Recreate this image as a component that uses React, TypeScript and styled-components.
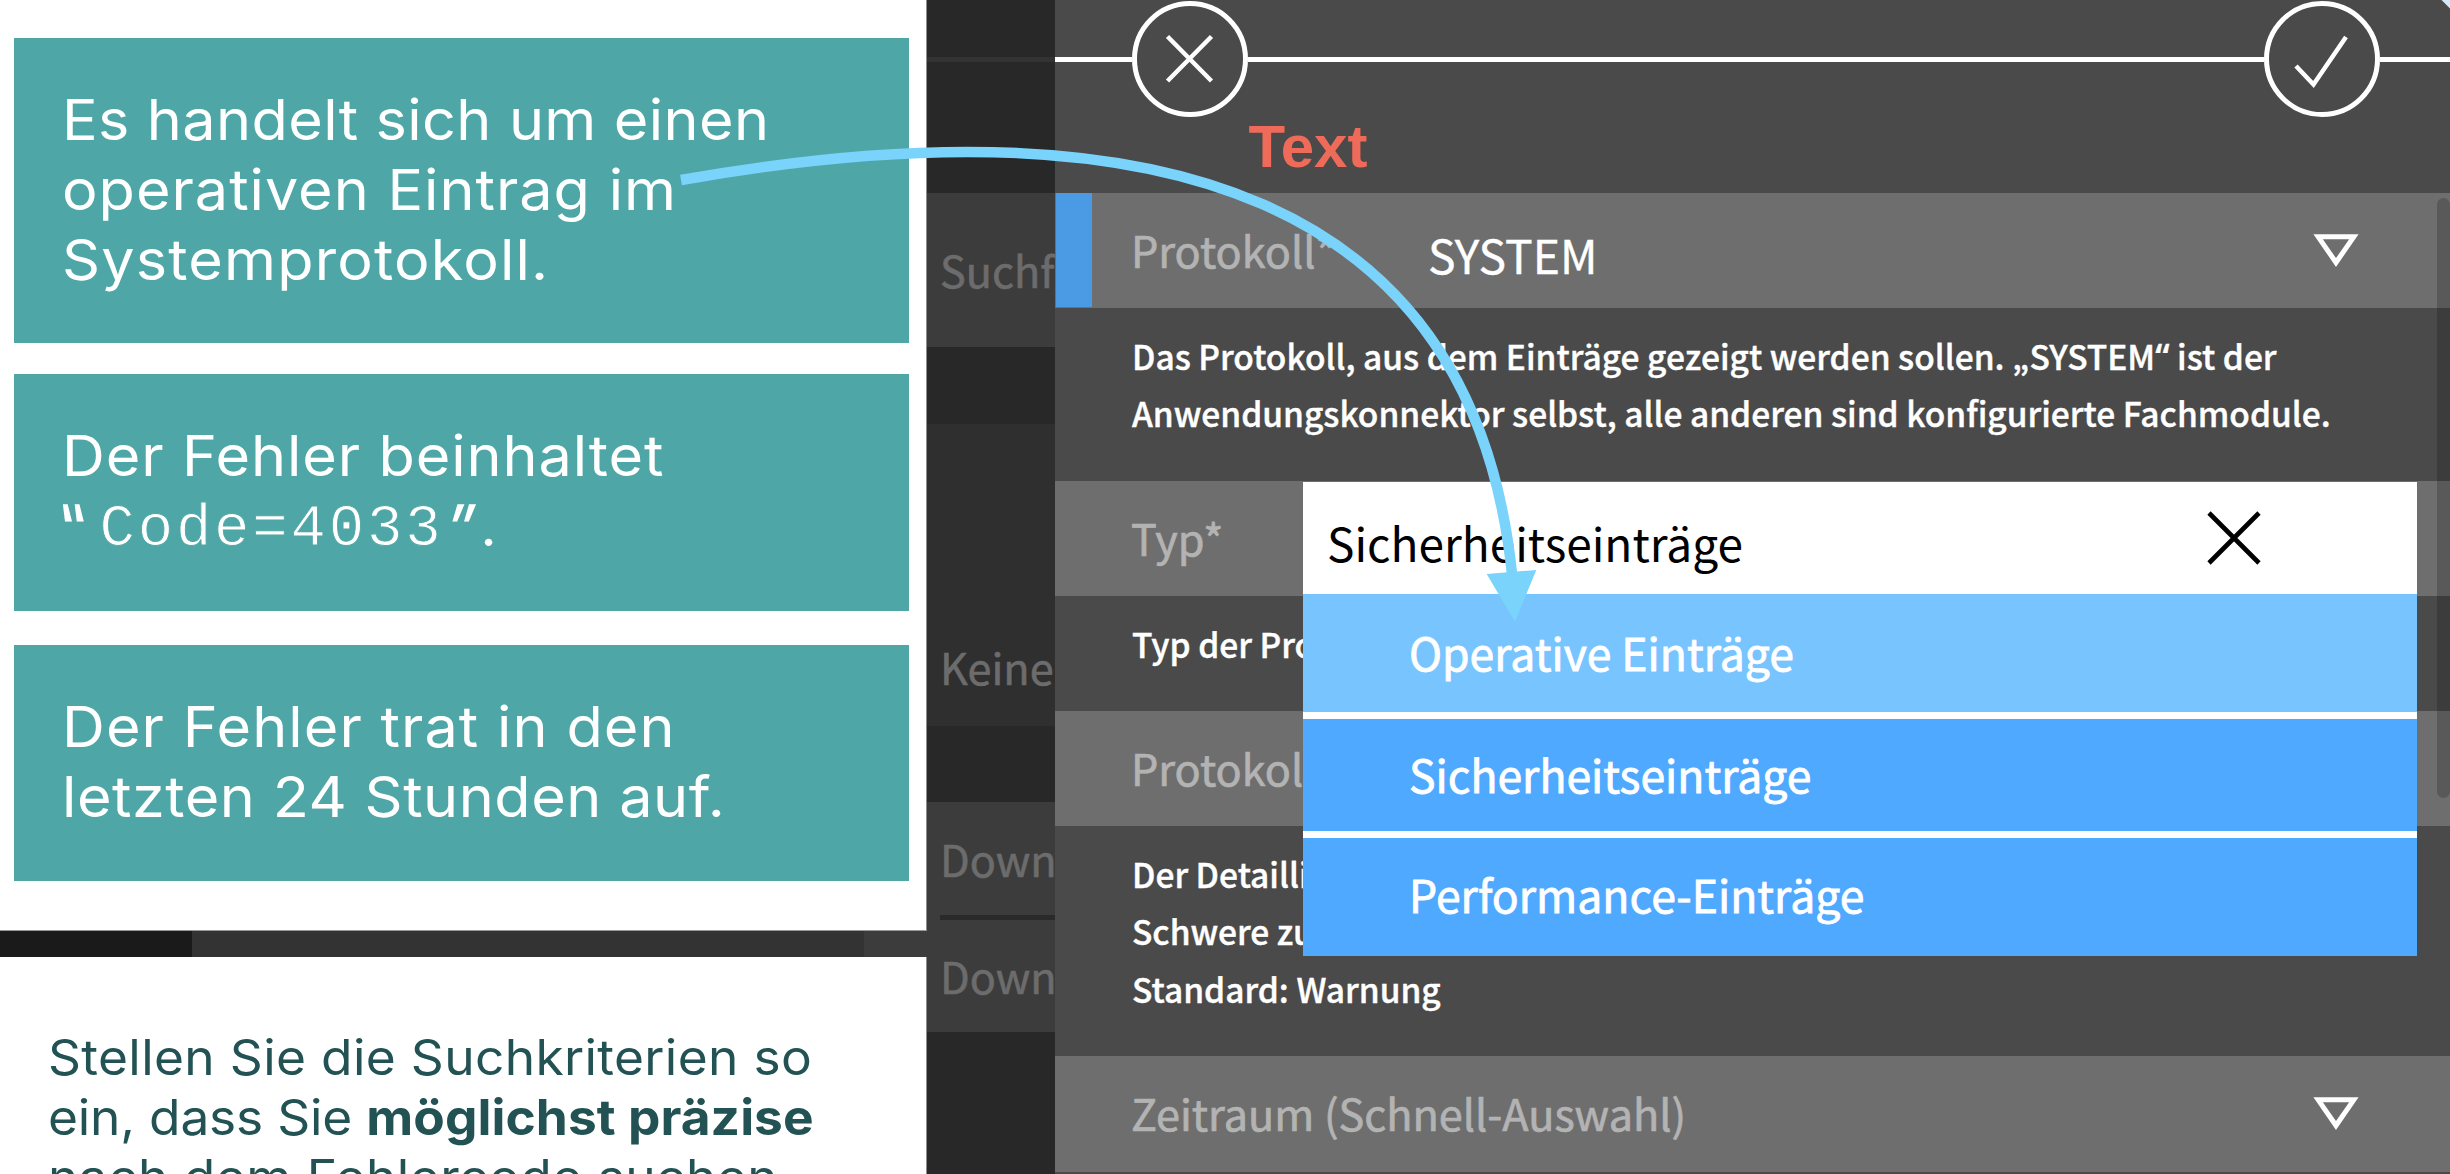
import React from 'react';
import styled, { createGlobalStyle } from 'styled-components';

const sans = '"Noto Sans CJK SC", "Noto Sans", sans-serif';
const grotesk = 'Inter, "Liberation Sans", sans-serif';

const GlobalStyle = createGlobalStyle`
  * { box-sizing: border-box; }
  body { margin: 0; background: #282828; }
`;

const Page = styled.main`
  position: relative;
  display: flex;
  width: 2450px;
  height: 1174px;
  overflow: hidden;
  font-family: ${sans};
`;

/* ---------- left column: instructions ---------- */

const Instructions = styled.section`
  flex: none;
  display: flex;
  flex-direction: column;
  width: 927px;
  height: 1174px;
  overflow: hidden;
  font-family: ${grotesk};
`;

const CardStack = styled.div`
  flex: none;
  display: flex;
  flex-direction: column;
  height: 931px;
  padding: 38px 17px 0 14px;
  background: #fff;
  border-right: 1px solid #8c8c8c;
  border-bottom: 1px solid #999;
`;

const Card = styled.article<{ $height: number; $gap: number }>`
  flex: none;
  height: ${(p) => p.$height}px;
  margin-bottom: ${(p) => p.$gap}px;
  padding: 47px 0 0 47.5px;
  background: #4ea7a6;
  color: #fff;
`;

const Line = styled.div<{ $track: number }>`
  height: 70px;
  font-size: 56px;
  line-height: 70px;
  letter-spacing: ${(p) => p.$track}px;
  white-space: pre;
  transform: scaleX(1.06);
  transform-origin: left;
`;

const CodeLine = styled.div`
  display: flex;
  height: 70px;
  font-size: 56px;
  line-height: 70px;
`;

const Quote = styled.span<{ $width: number; $lean: number }>`
  width: ${(p) => p.$width}px;
  font-size: 60px;
  font-weight: 500;
  transform: skewX(${(p) => p.$lean}deg);
`;

const Code = styled.code`
  width: 347px;
  padding-top: 4px;
  font: 400 59px/70px "Liberation Mono", monospace;
  letter-spacing: 2.8px;
  -webkit-text-stroke: 0.9px #4ea7a6;
`;

const PageStrip = styled.div`
  flex: none;
  display: flex;
  height: 26px;
`;

const StripPart = styled.div<{ $width: number; $tone: string }>`
  width: ${(p) => p.$width}px;
  background: ${(p) => p.$tone};
`;

const Task = styled.div`
  flex: none;
  height: 217px;
  padding: 71px 0 0 47.5px;
  overflow: hidden;
  background: #fff;
  border-right: 1px solid #8c8c8c;
  color: #225253;
`;

const TaskLine = styled.p<{ $track: number }>`
  height: 60px;
  margin: 0;
  font-size: 49px;
  line-height: 60px;
  letter-spacing: ${(p) => p.$track}px;
  white-space: pre;
  transform: scaleX(1.05);
  transform-origin: left;
`;

const Strong = styled.strong`
  font-weight: 700;
  letter-spacing: 0.05px;
`;

/* ---------- dimmed page behind the dialog ---------- */

const Backdrop = styled.aside`
  flex: none;
  display: flex;
  flex-direction: column;
  width: 128px;
  overflow: hidden;
  background: #282828;
`;

const Band = styled.div<{ $height: number; $tone?: string; $bottom?: number; $lift?: number }>`
  flex: none;
  display: flex;
  align-items: ${(p) => (p.$bottom ? 'flex-end' : 'center')};
  height: ${(p) => p.$height}px;
  padding: 0 0 ${(p) => p.$bottom ?? p.$lift ?? 0}px 13px;
  background: ${(p) => p.$tone ?? '#282828'};
  color: #6c6c6c;
  font-size: 43.2px;
  line-height: 60px;
  white-space: nowrap;
  -webkit-text-stroke: 0.6px #6c6c6c;
`;

const Divider = styled.div<{ $left: number; $tone: string; $height: number }>`
  flex: none;
  height: ${(p) => p.$height}px;
  padding-left: ${(p) => p.$left}px;
  background: ${(p) => p.$tone};
  background-clip: content-box;
`;

const DownloadGroup = styled.div`
  flex: none;
  background: #3c3c3c;
`;

/* ---------- dialog ---------- */

const Dialog = styled.section`
  position: relative;
  flex: 1;
  display: flex;
  flex-direction: column;
  background: #4a4a4a;
`;

const DialogTop = styled.header`
  flex: none;
  height: 193.3px;
`;

const Actions = styled.div`
  display: flex;
  align-items: center;
  height: 118px;
`;

const Rule = styled.div<{ $width?: number }>`
  flex: ${(p) => (p.$width ? 'none' : '1')};
  width: ${(p) => (p.$width ? `${p.$width}px` : 'auto')};
  height: 5px;
  background: #fff;
`;

const RoundButton = styled.button`
  flex: none;
  width: 116px;
  height: 116px;
  padding: 0;
  border: 5px solid #fff;
  border-radius: 50%;
  background: none;
  svg { display: block; }
`;

const Note = styled.div`
  padding-left: 193.5px;
  margin-top: -1.5px;
  color: #ee6b59;
  font: 700 60px/60px "Liberation Sans", Arial, sans-serif;
`;

const Field = styled.div`
  flex: none;
  display: flex;
  align-items: center;
  height: 115.2px;
  padding-right: 91px;
  background: #6e6e6e;
`;

const Accent = styled.div`
  width: 36px;
  height: 114px;
  margin-left: 1px;
  margin-right: -37px;
  align-self: flex-start;
  background: #4a9be3;
`;

const Label = styled.label`
  width: 297px;
  margin-left: 76px;
  padding-bottom: 3px;
  color: #b3b3b3;
  font-size: 43.2px;
  line-height: 60px;
  white-space: nowrap;
  -webkit-text-stroke: 0.7px #b3b3b3;
`;

const Value = styled.div`
  flex: 1;
  padding-top: 7px;
  color: #fff;
  font-size: 46.2px;
  line-height: 60px;
  -webkit-text-stroke: 0.4px #fff;
`;

const Spacer = styled.div`
  flex: 1;
`;

const Hint = styled.p<{ $lines: number }>`
  flex: none;
  height: ${(p) => (p.$lines + 1) * 57.5}px;
  margin: 0;
  padding: 18.5px 0 0 77px;
  color: #fff;
  font-size: 33.5px;
  font-weight: 500;
  line-height: 57.5px;
  white-space: pre;
  -webkit-text-stroke: 0.4px #fff;
`;

const ClosingMark = styled.span`
  font-family: "Open Sans", sans-serif;
  font-weight: 600;
  font-size: 36px;
  line-height: 1;
`;

const Scrollbar = styled.div`
  position: absolute;
  top: 198px;
  right: 0;
  width: 13px;
  height: 600px;
  border-radius: 7px;
  background: rgba(0, 0, 0, 0.19);
`;

const Corner = styled.div`
  position: absolute;
  top: -6px;
  right: -6px;
  width: 12px;
  height: 12px;
  transform: rotate(45deg);
  background: #d5e6f5;
`;

/* ---------- open menu ---------- */

const Menu = styled.div`
  position: absolute;
  top: 481.5px;
  left: 248px;
  display: flex;
  flex-direction: column;
  gap: 7px;
  width: 1114px;
  background: #fff;
`;

const MenuHead = styled.div`
  display: flex;
  align-items: center;
  justify-content: space-between;
  height: 112px;
  margin-bottom: -7px;
  padding: 0 156.5px 0 24px;
  color: #000;
`;

const Selected = styled.span`
  padding-top: 8px;
  font-size: 46px;
  line-height: 60px;
`;

const Option = styled.div<{ $height: number; $active?: boolean; $lift: number }>`
  display: flex;
  align-items: center;
  height: ${(p) => p.$height}px;
  padding: 0 0 ${(p) => p.$lift}px 106px;
  background: ${(p) => (p.$active ? '#77c4ff' : '#4fa9ff')};
  color: #fff;
  font-size: 44.5px;
  line-height: 60px;
  -webkit-text-stroke: 0.8px #fff;
`;

const Arrow = styled.svg`
  position: absolute;
  inset: 0;
  pointer-events: none;
`;

function Triangle() {
  return (
    <svg width="46" height="36" viewBox="0 0 46 36" fill="none">
      <path d="M5.2 3.8H40.8L23 29.5Z" stroke="#fff" strokeWidth="5" />
    </svg>
  );
}

export default function App() {
  return (
    <>
      <GlobalStyle />
      <Page>
        <Instructions>
          <CardStack>
            <Card $height={304.5} $gap={31.5}>
              <Line $track={0.35}>Es handelt sich um einen</Line>
              <Line $track={0.93}>operativen Eintrag im</Line>
              <Line $track={1.1}>Systemprotokoll.</Line>
            </Card>
            <Card $height={237} $gap={34}>
              <Line $track={0.83}>Der Fehler beinhaltet</Line>
              <CodeLine>
                <Quote $width={38} $lean={22}>“</Quote>
                <Code>Code=4033</Code>
                <Quote $width={34} $lean={-8}>”</Quote>
                <span>.</span>
              </CodeLine>
            </Card>
            <Card $height={235.5} $gap={0}>
              <Line $track={1}>Der Fehler trat in den</Line>
              <Line $track={0.5}>letzten 24 Stunden auf.</Line>
            </Card>
          </CardStack>
          <PageStrip>
            <StripPart $width={192} $tone="#1a1a1a" />
            <StripPart $width={672} $tone="#333333" />
            <StripPart $width={63} $tone="#3c3c3c" />
          </PageStrip>
          <Task>
            <TaskLine $track={0.32}>Stellen Sie die Suchkriterien so</TaskLine>
            <TaskLine $track={-0.2}>
              ein, dass Sie <Strong>möglichst präzise</Strong>
            </TaskLine>
            <TaskLine $track={0.43}>nach dem Fehlercode suchen</TaskLine>
          </Task>
        </Instructions>

        <Backdrop>
          <Band $height={57} />
          <Divider $left={0} $tone="#333333" $height={5} />
          <Band $height={131} />
          <Band $height={154} $tone="#3c3c3c" $lift={2}>Suchf</Band>
          <Band $height={77} />
          <Band $height={301.5} $tone="#2f2f2f" $bottom={30}>Keine</Band>
          <Band $height={76.5} />
          <DownloadGroup>
            <Band $height={113} $tone="transparent" $lift={2}>Down</Band>
            <Divider $left={13} $tone="#2a2a2a" $height={5} />
            <Band $height={112} $tone="transparent" $lift={2}>Down</Band>
          </DownloadGroup>
        </Backdrop>

        <Dialog>
          <DialogTop>
            <Actions>
              <Rule $width={77} />
              <RoundButton aria-label="Abbrechen">
                <svg width="106" height="106" viewBox="0 0 106 106" fill="none">
                  <path d="M30.5 30.5L74.5 75M74.5 30.5L30.5 75" stroke="#fff" strokeWidth="4.5" />
                </svg>
              </RoundButton>
              <Rule />
              <RoundButton aria-label="Übernehmen">
                <svg width="106" height="106" viewBox="0 0 106 106" fill="none">
                  <path d="M27 60L44.5 78.5L77 31" stroke="#fff" strokeWidth="4.5" />
                </svg>
              </RoundButton>
              <Rule $width={70} />
            </Actions>
            <Note>Text</Note>
          </DialogTop>

          <Field>
            <Accent />
            <Label>Protokoll*</Label>
            <Value>SYSTEM</Value>
            <Triangle />
          </Field>
          <Hint $lines={2}>
            Das Protokoll, aus dem Einträge gezeigt werden sollen. „SYSTEM<ClosingMark>“</ClosingMark> ist der{'\n'}
            Anwendungskonnektor selbst, alle anderen sind konfigurierte Fachmodule.
          </Hint>
          <Field>
            <Label>Typ*</Label>
          </Field>
          <Hint $lines={1}>Typ der Pro</Hint>
          <Field>
            <Label>Protokoll</Label>
          </Field>
          <Hint $lines={3}>
            Der Detailli{'\n'}
            Schwere zu{'\n'}
            Standard: Warnung
          </Hint>
          <Field>
            <Label>Zeitraum (Schnell-Auswahl)</Label>
            <Spacer />
            <Triangle />
          </Field>

          <Scrollbar />
          <Corner />

          <Menu>
            <MenuHead>
              <Selected>Sicherheitseinträge</Selected>
              <svg width="54" height="54" viewBox="0 0 54 54" fill="none">
                <path d="M2 2L52 52M52 2L2 52" stroke="#000" strokeWidth="4.6" />
              </svg>
            </MenuHead>
            <Option $height={118} $lift={2} $active>Operative Einträge</Option>
            <Option $height={112.5} $lift={2}>Sicherheitseinträge</Option>
            <Option $height={118} $lift={6}>Performance-Einträge</Option>
          </Menu>
        </Dialog>

        <Arrow width="2450" height="1174" viewBox="0 0 2450 1174" fill="none">
          <path d="M681 180C1160 95 1473 197 1512 574" stroke="#79d3fa" strokeWidth="10.5" />
          <path d="M1486.7 574L1536.3 570L1515 621.7Z" fill="#79d3fa" />
        </Arrow>
      </Page>
    </>
  );
}
